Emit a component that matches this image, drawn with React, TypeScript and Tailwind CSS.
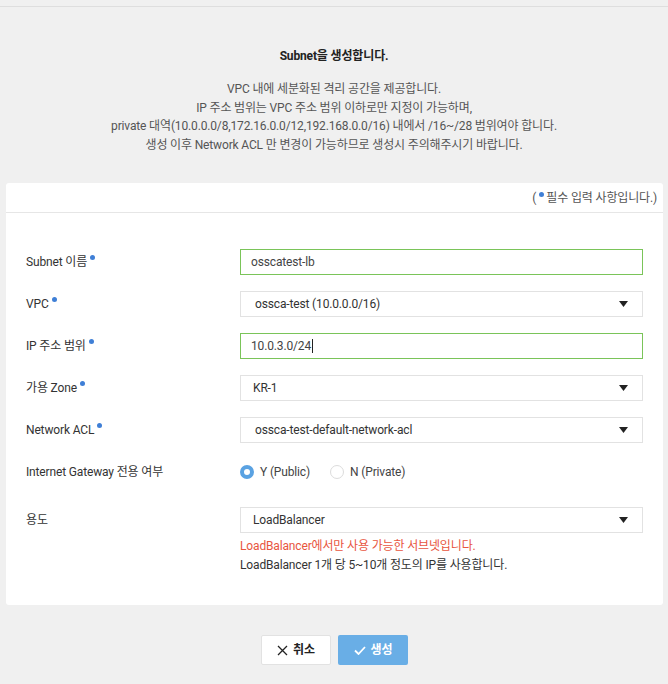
import React from "react";

const font = { fontFamily: 'Roboto, "Noto Sans CJK KR", sans-serif' };

const Dot = () => (
  <span className="ml-[3px] inline-block h-[5px] w-[5px] -translate-y-[5px] rounded-full bg-[#3f7fd6] align-middle" />
);

const Caret = () => (
  <svg width="9" height="6" viewBox="0 0 9 6" className="shrink-0">
    <path d="M0 0h9L4.5 6z" fill="#222" />
  </svg>
);

const TextInput = ({ value, caret }: { value: string; caret?: boolean }) => (
  <div className="flex h-[26px] flex-1 items-center border border-[#7ac459] bg-white px-[10px] text-[12px] text-[#444]">
    <span>{value}</span>
    {caret && <span className="ml-[1px] h-[14px] w-px bg-[#222]" />}
  </div>
);

const Select = ({
  value,
  padLeft = "pl-[14px]",
  className = "flex-1",
}: {
  value: string;
  padLeft?: string;
  className?: string;
}) => (
  <div
    className={`flex h-[26px] items-center justify-between border border-[#e2e2e2] bg-white ${padLeft} pr-[14px] text-[12px] text-[#333] ${className}`}
  >
    <span>{value}</span>
    <Caret />
  </div>
);

const Row = ({
  label,
  required,
  children,
  className = "",
}: {
  label: string;
  required?: boolean;
  children: React.ReactNode;
  className?: string;
}) => (
  <div className={`flex items-center ${className}`}>
    <div className="w-[214px] shrink-0 text-[12px] text-[#333]">
      {label}
      {required && <Dot />}
    </div>
    {children}
  </div>
);

const Radio = ({ checked, label }: { checked?: boolean; label: string }) => (
  <label className="flex items-center gap-[6px] text-[12px] text-[#444]">
    <span
      className={
        checked
          ? "h-[14px] w-[14px] rounded-full border-[4px] border-[#5aa2e2] bg-white"
          : "h-[14px] w-[14px] rounded-full border border-[#dcdcdc] bg-white"
      }
    />
    {label}
  </label>
);

export default function App() {
  return (
    <div className="min-h-[684px] bg-[#f0f0f0] pt-[6px] tracking-[-0.15px]" style={font}>
      <div className="border-t border-[#dedede]" />

      <div className="pt-[40px] text-center">
        <h2 className="text-[12px] font-bold leading-[18px] text-[#222]">Subnet을 생성합니다.</h2>
        <div className="mt-[15px] text-[12px] leading-[18.5px] text-[#555]">
          <p>VPC 내에 세분화된 격리 공간을 제공합니다.</p>
          <p>IP 주소 범위는 VPC 주소 범위 이하로만 지정이 가능하며,</p>
          <p>private 대역(10.0.0.0/8,172.16.0.0/12,192.168.0.0/16) 내에서 /16~/28 범위여야 합니다.</p>
          <p>생성 이후 Network ACL 만 변경이 가능하므로 생성시 주의해주시기 바랍니다.</p>
        </div>
      </div>

      <div className="ml-[6px] mr-[5px] mt-[29px] rounded-[3px] bg-white">
        <div className="flex h-[30px] items-center justify-end border-b border-[#e6e6e6] pr-[6px] text-[12px] text-[#555]">
          (<span className="ml-[3px] mr-[2px] inline-block h-[5px] w-[5px] -translate-y-[3px] rounded-full bg-[#3f7fd6]" />
          필수 입력 사항입니다.)
        </div>

        <div className="flex flex-col px-[20px] pb-[31px] pt-[36px]">
          <Row label="Subnet 이름" required>
            <TextInput value="osscatest-lb" />
          </Row>
          <Row label="VPC" required className="mt-[16px]">
            <Select value="ossca-test (10.0.0.0/16)" />
          </Row>
          <Row label="IP 주소 범위" required className="mt-[16px]">
            <TextInput value="10.0.3.0/24" caret />
          </Row>
          <Row label="가용 Zone" required className="mt-[16px]">
            <Select value="KR-1" padLeft="pl-[12px]" />
          </Row>
          <Row label="Network ACL" required className="mt-[16px]">
            <Select value="ossca-test-default-network-acl" />
          </Row>
          <Row label="Internet Gateway 전용 여부" className="mt-[16px] h-[26px]">
            <div className="flex items-center gap-[20px]">
              <Radio checked label="Y (Public)" />
              <Radio label="N (Private)" />
            </div>
          </Row>
          <div className="mt-[22px] flex">
            <div className="flex h-[26px] w-[214px] shrink-0 items-center text-[12px] text-[#333]">용도</div>
            <div className="flex flex-1 flex-col">
              <Select value="LoadBalancer" padLeft="pl-[12px]" className="w-full shrink-0" />
              <p className="mt-[4px] text-[12px] leading-[18.5px] text-[#e8553e]">
                LoadBalancer에서만 사용 가능한 서브넷입니다.
              </p>
              <p className="text-[12px] leading-[18.5px] text-[#333]">
                LoadBalancer 1개 당 5~10개 정도의 IP를 사용합니다.
              </p>
            </div>
          </div>
        </div>
      </div>

      <div className="mt-[30px] flex justify-center gap-[7px] pl-[1px]">
        <button className="flex h-[30px] w-[70px] items-center justify-center gap-[5px] rounded-[2px] border border-[#e2e2e2] bg-white text-[12px] font-bold text-[#222]">
          <svg width="11" height="11" viewBox="0 0 11 11">
            <path d="M1 1l9 9M10 1l-9 9" stroke="#222" strokeWidth="1.3" />
          </svg>
          취소
        </button>
        <button className="flex h-[30px] w-[70px] items-center justify-center gap-[5px] rounded-[2px] bg-[#69aee6] text-[12px] font-bold text-white">
          <svg width="12" height="9" viewBox="0 0 12 9">
            <path d="M1 4.5l3.5 3.5L11 1" fill="none" stroke="#fff" strokeWidth="1.8" />
          </svg>
          생성
        </button>
      </div>
    </div>
  );
}
